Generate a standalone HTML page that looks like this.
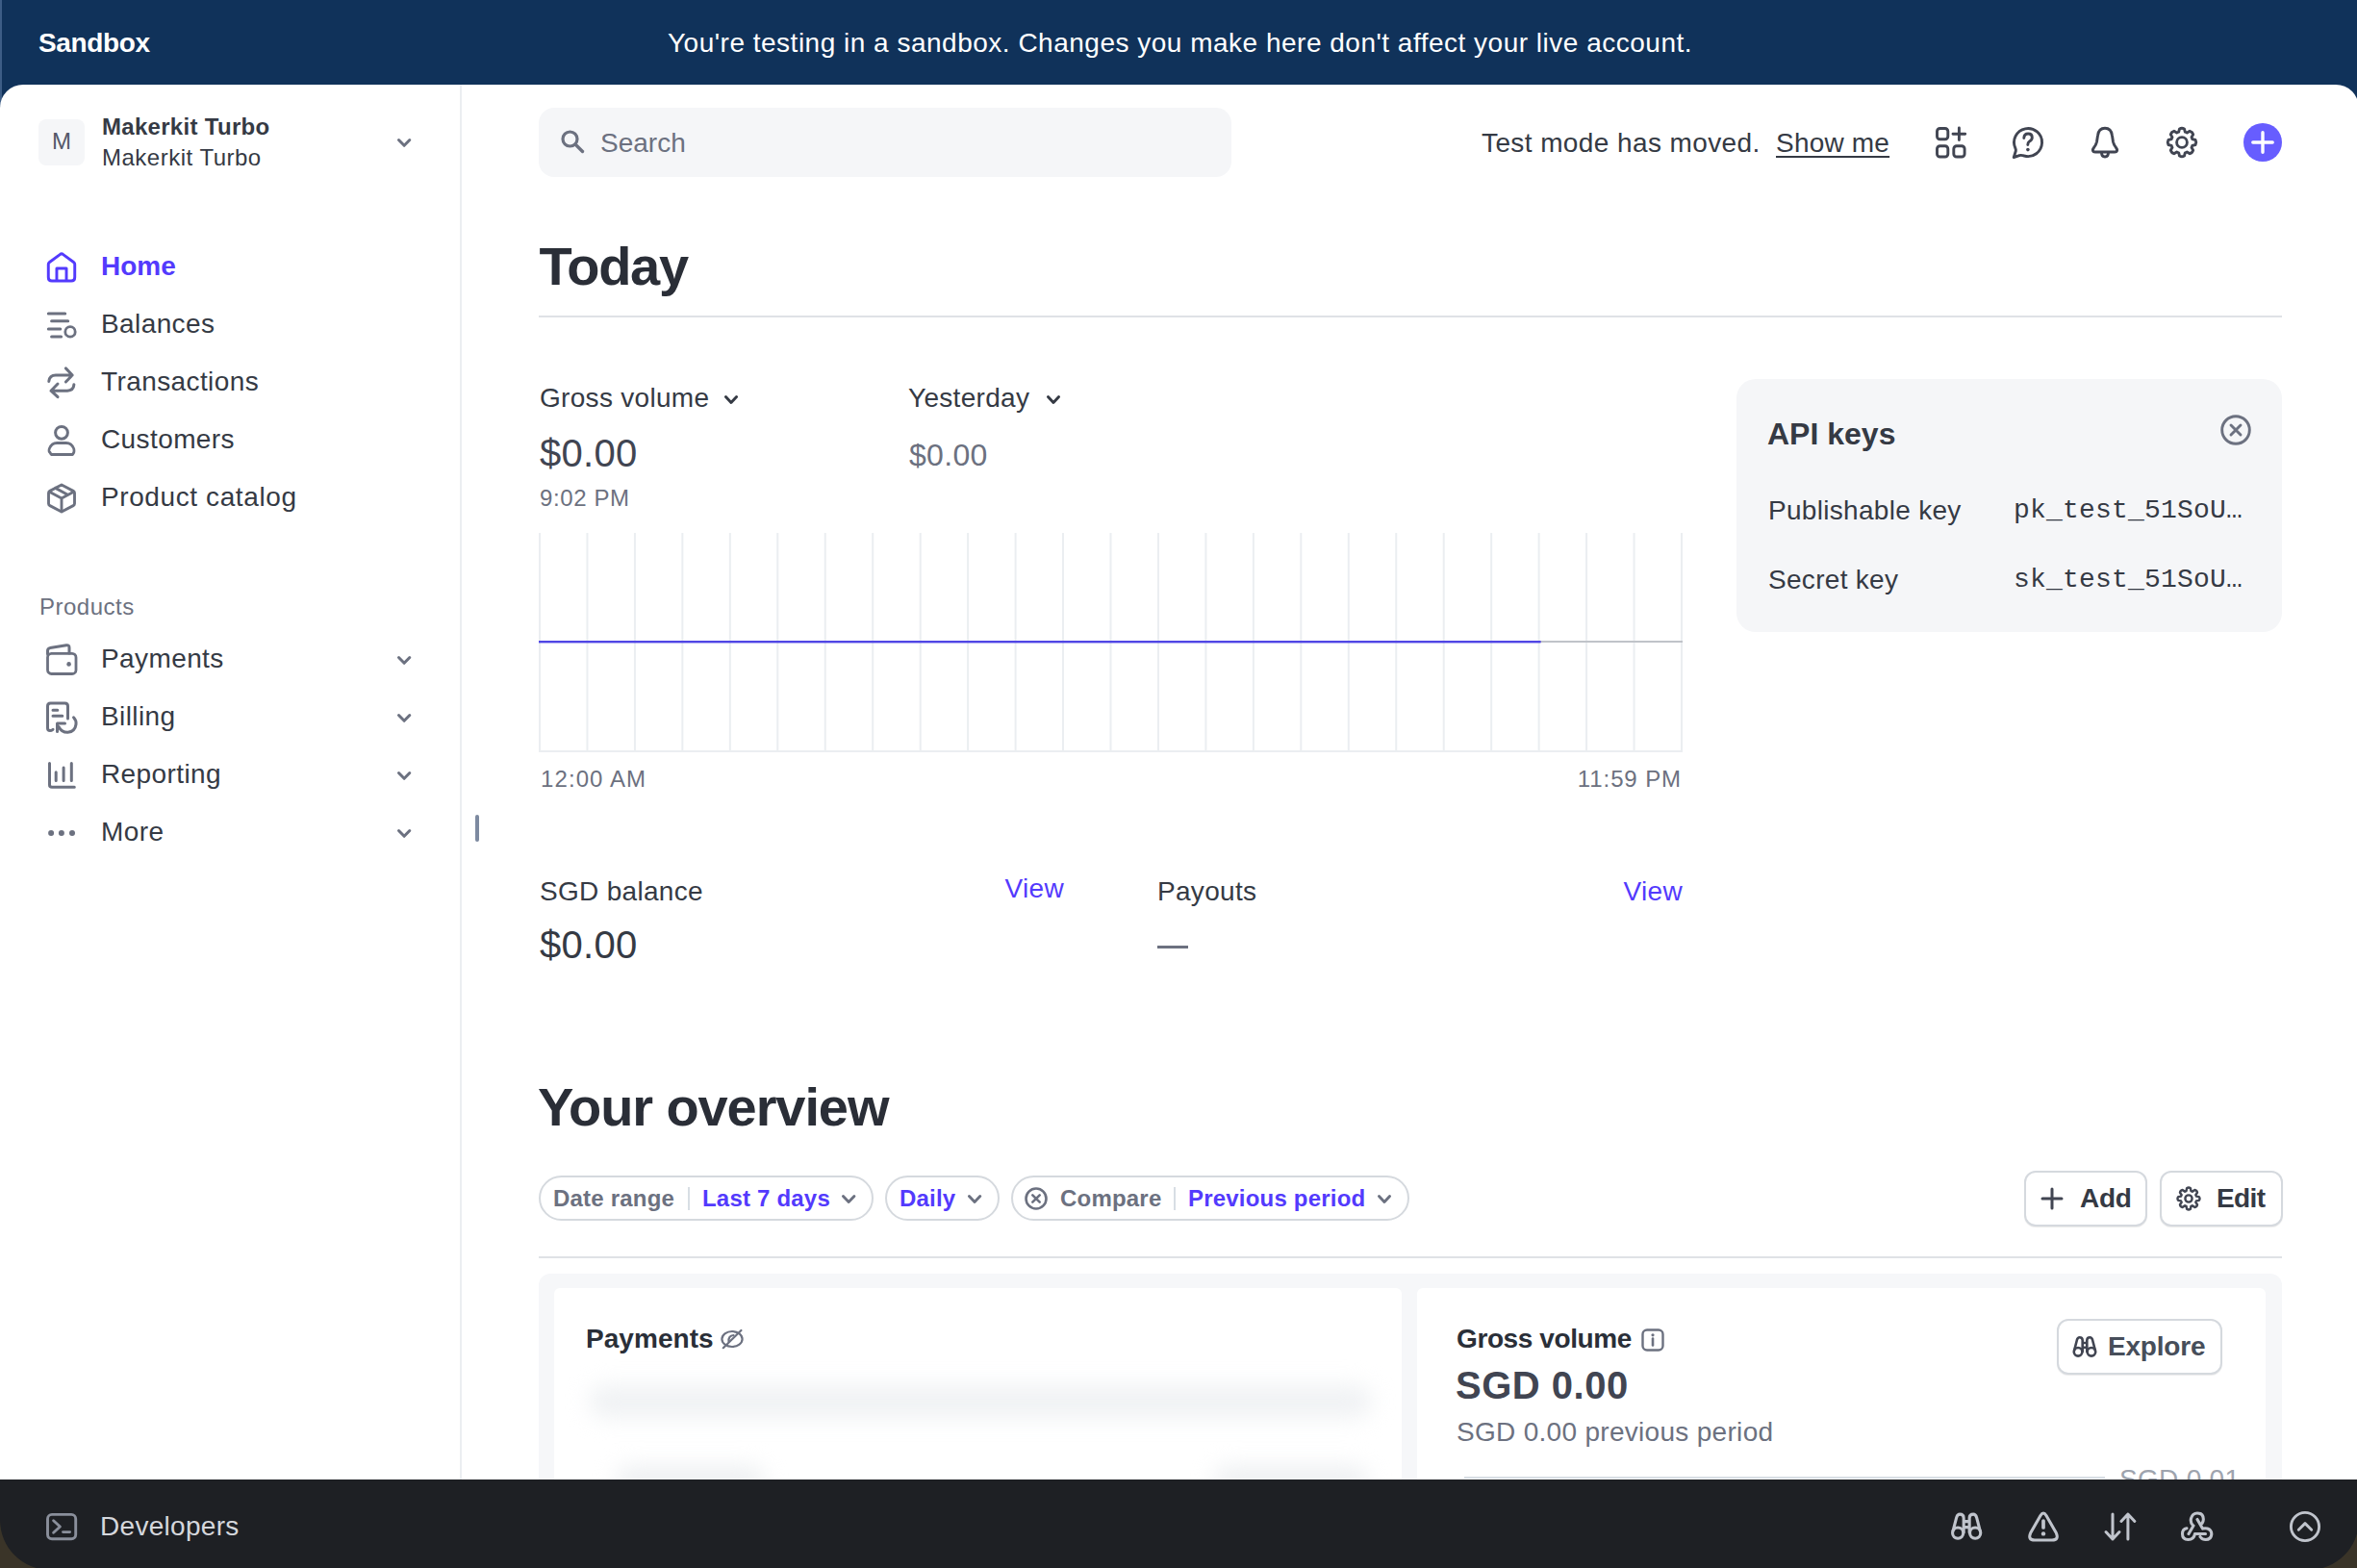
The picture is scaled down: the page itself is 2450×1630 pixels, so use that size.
<!DOCTYPE html>
<html><head><meta charset="utf-8"><title>Stripe Dashboard</title>
<style>
html,body{margin:0;padding:0;}
body{width:2450px;height:1630px;position:relative;overflow:hidden;background:#3a3428;font-family:"Liberation Sans",sans-serif;}
.t{position:absolute;white-space:nowrap;}
.ic{position:absolute;overflow:visible;}
</style></head><body>
<div style="position:absolute;left:0px;top:0px;width:2450px;height:120px;background:#10325a;"></div>
<div style="position:absolute;left:0px;top:0px;width:2px;height:110px;background:#3d5d86;"></div>
<div class="t" style="left:40px;top:30.6px;font-size:28px;line-height:28px;font-weight:700;color:#ffffff;letter-spacing:-0.35px;">Sandbox</div>
<div class="t" style="left:694px;top:30.5px;font-size:28px;line-height:28px;font-weight:400;color:#ffffff;letter-spacing:0.5px;">You're testing in a sandbox. Changes you make here don't affect your live account.</div>
<div style="position:absolute;left:0px;top:88px;width:2452px;height:1480px;background:#ffffff;border-radius:24px 24px 0 0;"></div>
<div style="position:absolute;left:478px;top:88px;width:2px;height:1450px;background:#ebeef1;"></div>
<div style="position:absolute;left:40px;top:124px;width:48px;height:48px;background:#f5f6f8;border-radius:8px;"></div>
<div class="t" style="left:54px;top:135.3px;font-size:24px;line-height:24px;font-weight:400;color:#545969;">M</div>
<div class="t" style="left:106px;top:119.7px;font-size:24px;line-height:24px;font-weight:700;color:#353a44;letter-spacing:0.3px;">Makerkit Turbo</div>
<div class="t" style="left:106px;top:151.5px;font-size:24px;line-height:24px;font-weight:400;color:#353a44;letter-spacing:0.5px;">Makerkit Turbo</div>
<svg class="ic" style="left:412.7px;top:143.9px;" width="14.3" height="8.8" viewBox="0 0 14.3 8.8" fill="none"><path d="M1.5 1.5 L7.15 7.300000000000001 L12.8 1.5" stroke="#6c7180" stroke-width="3.0" stroke-linecap="round" stroke-linejoin="round"/></svg>
<div class="t" style="left:105px;top:263.3px;font-size:28px;line-height:28px;font-weight:700;color:#533afd;">Home</div>
<div class="t" style="left:105px;top:323.3px;font-size:28px;line-height:28px;font-weight:400;color:#353a44;letter-spacing:0.4px;">Balances</div>
<div class="t" style="left:105px;top:383.3px;font-size:28px;line-height:28px;font-weight:400;color:#353a44;letter-spacing:0.4px;">Transactions</div>
<div class="t" style="left:105px;top:443.3px;font-size:28px;line-height:28px;font-weight:400;color:#353a44;letter-spacing:0.4px;">Customers</div>
<div class="t" style="left:105px;top:503.3px;font-size:28px;line-height:28px;font-weight:400;color:#353a44;letter-spacing:0.6px;">Product catalog</div>
<svg class="ic" style="left:44px;top:258px;" width="40" height="40" viewBox="0 0 40 40" fill="none"><g transform="translate(20 20) scale(0.915 0.94) translate(-20 -20)"><path d="M6 14.5 L18.5 5.5 Q20 4.5 21.5 5.5 L34 14.5 Q35 15.3 35 16.5 V31 Q35 35 31 35 H9 Q5 35 5 31 V16.5 Q5 15.3 6 14.5 Z" stroke="#533afd" stroke-width="3.2" stroke-linejoin="round"/><path d="M14.5 35 V21 H25.5 V35" stroke="#533afd" stroke-width="3.2" stroke-linejoin="round"/></g></svg>
<svg class="ic" style="left:44px;top:318px;" width="40" height="40" viewBox="0 0 40 40" fill="none"><path d="M6.3 8 H23.7 M9.6 15.7 H26.7 M6.3 24 H18.8 M9.6 32 H19.6" stroke="#6c7180" stroke-width="3" stroke-linecap="round" stroke-linejoin="round"/><circle cx="29" cy="26.9" r="5.2" stroke="#6c7180" stroke-width="2.8"/></svg>
<svg class="ic" style="left:44px;top:378px;" width="40" height="40" viewBox="0 0 40 40" fill="none"><path d="M6.8 18.4 Q7.5 12 14 12 H31 M24.4 4.9 L31.2 12 L24.4 19 M32.9 21.7 Q32.5 28 26 28.2 H9 M16 21 L9 28.2 L16 34.7" stroke="#6c7180" stroke-width="3" stroke-linecap="round" stroke-linejoin="round"/></svg>
<svg class="ic" style="left:44px;top:438px;" width="40" height="40" viewBox="0 0 40 40" fill="none"><circle cx="20" cy="11.8" r="6.4" stroke="#6c7180" stroke-width="3"/><g transform="translate(20 20) scale(0.88 1) translate(-20 -20)"><path d="M6.5 32.5 Q4.5 32 5.5 28.5 Q8 22.4 14.5 22.4 H25.5 Q32 22.4 34.5 28.5 Q35.5 32 33.5 34 Q32.8 34.6 31 34.6 H9 Q7.2 34.6 6.5 32.5 Z" stroke="#6c7180" stroke-width="3" stroke-linecap="round" stroke-linejoin="round"/></g></svg>
<svg class="ic" style="left:44px;top:498px;" width="40" height="40" viewBox="0 0 40 40" fill="none"><g transform="translate(20 20) scale(0.9) translate(-20 -20)"><path d="M20 4.5 L33.5 11.5 Q35 12.4 35 14 V26 Q35 27.6 33.5 28.5 L20 35.5 L6.5 28.5 Q5 27.6 5 26 V14 Q5 12.4 6.5 11.5 Z" stroke="#6c7180" stroke-width="3.2" stroke-linejoin="round"/><path d="M6 12.5 L20 20 L34 12.5 M20 20 V35 M13 8.2 L27 15.8" stroke="#6c7180" stroke-width="3.2" stroke-linejoin="round" stroke-linecap="round"/></g></svg>
<div class="t" style="left:41px;top:618.9px;font-size:24px;line-height:24px;font-weight:400;color:#6c7180;letter-spacing:0.5px;">Products</div>
<div class="t" style="left:105px;top:671.0px;font-size:28px;line-height:28px;font-weight:400;color:#353a44;letter-spacing:0.4px;">Payments</div>
<svg class="ic" style="left:412.6px;top:682.3000000000001px;" width="14.3" height="8.8" viewBox="0 0 14.3 8.8" fill="none"><path d="M1.5 1.5 L7.15 7.300000000000001 L12.8 1.5" stroke="#6c7180" stroke-width="3.0" stroke-linecap="round" stroke-linejoin="round"/></svg>
<div class="t" style="left:105px;top:730.9px;font-size:28px;line-height:28px;font-weight:400;color:#353a44;letter-spacing:0.4px;">Billing</div>
<svg class="ic" style="left:412.6px;top:742.2px;" width="14.3" height="8.8" viewBox="0 0 14.3 8.8" fill="none"><path d="M1.5 1.5 L7.15 7.300000000000001 L12.8 1.5" stroke="#6c7180" stroke-width="3.0" stroke-linecap="round" stroke-linejoin="round"/></svg>
<div class="t" style="left:105px;top:790.9px;font-size:28px;line-height:28px;font-weight:400;color:#353a44;letter-spacing:0.4px;">Reporting</div>
<svg class="ic" style="left:412.6px;top:802.2px;" width="14.3" height="8.8" viewBox="0 0 14.3 8.8" fill="none"><path d="M1.5 1.5 L7.15 7.300000000000001 L12.8 1.5" stroke="#6c7180" stroke-width="3.0" stroke-linecap="round" stroke-linejoin="round"/></svg>
<div class="t" style="left:105px;top:850.8px;font-size:28px;line-height:28px;font-weight:400;color:#353a44;letter-spacing:0.4px;">More</div>
<svg class="ic" style="left:412.6px;top:862.1px;" width="14.3" height="8.8" viewBox="0 0 14.3 8.8" fill="none"><path d="M1.5 1.5 L7.15 7.300000000000001 L12.8 1.5" stroke="#6c7180" stroke-width="3.0" stroke-linecap="round" stroke-linejoin="round"/></svg>
<svg class="ic" style="left:44px;top:666px;" width="40" height="40" viewBox="0 0 40 40" fill="none"><rect x="5.5" y="13.4" width="29.5" height="21.1" rx="4" stroke="#6c7180" stroke-width="2.8"/><path d="M5.5 14 V10.5 Q5.5 8.2 8 7.6 L25 4.8 Q28 4.3 28 7.2 V13" stroke="#6c7180" stroke-width="3" stroke-linecap="round" stroke-linejoin="round"/><circle cx="27.6" cy="24.4" r="2.3" fill="#6c7180"/></svg>
<svg class="ic" style="left:44px;top:726px;" width="40" height="40" viewBox="0 0 40 40" fill="none"><path d="M5.5 31 V8 Q5.5 5 8.5 5 H23.5 Q26.5 5 26.5 8 V21 M5.5 31 Q5.5 33.5 8 33.5 Q9.5 33.5 11 32.3" stroke="#6c7180" stroke-width="3" stroke-linecap="round" stroke-linejoin="round"/><path d="M11 12.3 H15.8 M11 18.2 H20.8" stroke="#6c7180" stroke-width="3" stroke-linecap="round" stroke-linejoin="round"/><path d="M32.5 19.8 Q35.5 23 35 27 Q34 34.5 26.5 35.3 Q20 35.5 17 29.5 M15.5 34.5 L15.5 26 L23.5 26" stroke="#6c7180" stroke-width="3" stroke-linecap="round" stroke-linejoin="round"/></svg>
<svg class="ic" style="left:44px;top:786px;" width="40" height="40" viewBox="0 0 40 40" fill="none"><path d="M7.5 7.4 V30 Q7.5 32.3 10 32.3 H33.3 M14.2 16.8 V25.5 M22.1 11.9 V25.5 M30.3 7.4 V25.5" stroke="#6c7180" stroke-width="3" stroke-linecap="round" stroke-linejoin="round"/></svg>
<svg class="ic" style="left:44px;top:846px;" width="40" height="40" viewBox="0 0 40 40" fill="none"><circle cx="9.1" cy="20" r="3" fill="#6c7180"/><circle cx="19.9" cy="20" r="3" fill="#6c7180"/><circle cx="31" cy="20" r="3" fill="#6c7180"/></svg>
<div style="position:absolute;left:494px;top:847px;width:4px;height:28px;background:#7d8aa0;border-radius:2px;"></div>
<div style="position:absolute;left:560px;top:112px;width:720px;height:72px;background:#f5f6f8;border-radius:16px;"></div>
<svg class="ic" style="left:580px;top:132px;" width="30" height="30" viewBox="0 0 30 30" fill="none"><circle cx="12.5" cy="12.5" r="7.5" stroke="#6c7180" stroke-width="3.2"/><path d="M18 18 L25.5 25.5" stroke="#6c7180" stroke-width="3.4" stroke-linecap="round"/></svg>
<div class="t" style="left:624px;top:135.3px;font-size:28px;line-height:28px;font-weight:400;color:#6c7180;">Search</div>
<div class="t" style="left:1540px;top:134.8px;font-size:28px;line-height:28px;font-weight:400;color:#353a44;letter-spacing:0.4px;">Test mode has moved.</div>
<div class="t" style="left:1846px;top:134.8px;font-size:28px;line-height:28px;font-weight:400;color:#353a44;letter-spacing:0.2px;text-decoration:underline;text-decoration-thickness:2px;text-underline-offset:4px;">Show me</div>
<svg class="ic" style="left:2008px;top:128px;" width="40" height="40" viewBox="0 0 40 40" fill="none"><rect x="5.5" y="5.5" width="11.3" height="11.3" rx="3" stroke="#414552" stroke-width="2.9"/><rect x="5.5" y="23.7" width="11.3" height="11.3" rx="3" stroke="#414552" stroke-width="2.9"/><rect x="22.8" y="23.7" width="11.3" height="11.3" rx="3" stroke="#414552" stroke-width="2.9"/><path d="M28.4 5 V17.5 M22 11.2 H34.7" stroke="#414552" stroke-width="2.9" stroke-linecap="round" stroke-linejoin="round"/></svg>
<svg class="ic" style="left:2080px;top:120px;" width="60" height="60" viewBox="2080 120 60 60" fill="none"><path d="M2094.9 154.1 A14.5 14.5 0 1 1 2104.2 162 Q2101 161 2099 161.6 L2093.2 163.6 L2095.3 157 Q2095.6 155.6 2094.9 154.1 Z" stroke="#414552" stroke-width="2.9" stroke-linecap="round" stroke-linejoin="round"/><path d="M2103.8 143.5 Q2104 139 2108.2 139 Q2112.3 139 2112.3 143 Q2112.3 145.5 2109.5 147 Q2107.8 148 2107.8 150.5" stroke="#414552" stroke-width="2.9" stroke-linecap="round" stroke-linejoin="round"/><circle cx="2107.9" cy="155.6" r="1.8" fill="#414552"/></svg>
<svg class="ic" style="left:2168px;top:128px;" width="40" height="40" viewBox="0 0 40 40" fill="none"><path d="M20 5.3 Q26.5 5.3 27.5 13 L28.5 19.5 Q29 22 31.5 25.5 Q33.5 28 32 29.5 Q31.3 30 30 30 H10 Q8.7 30 8 29.5 Q6.5 28 8.5 25.5 Q11 22 11.5 19.5 L12.5 13 Q13.5 5.3 20 5.3 Z" stroke="#414552" stroke-width="2.9" stroke-linecap="round" stroke-linejoin="round"/><path d="M16.5 30.5 Q16.5 35 20 35 Q23.5 35 23.5 30.5" stroke="#414552" stroke-width="2.9" stroke-linecap="round" stroke-linejoin="round"/></svg>
<svg class="ic" style="left:2248px;top:128px;" width="40" height="40" viewBox="0 0 40 40" fill="none"><path d="M16.70 9.19 L17.52 5.92 Q20.00 4.50 22.48 5.92 L23.30 9.19 A11.3 11.3 0 0 1 25.31 10.02 L28.20 8.29 Q30.96 9.04 31.71 11.80 L29.98 14.69 A11.3 11.3 0 0 1 30.81 16.70 L34.08 17.52 Q35.50 20.00 34.08 22.48 L30.81 23.30 A11.3 11.3 0 0 1 29.98 25.31 L31.71 28.20 Q30.96 30.96 28.20 31.71 L25.31 29.98 A11.3 11.3 0 0 1 23.30 30.81 L22.48 34.08 Q20.00 35.50 17.52 34.08 L16.70 30.81 A11.3 11.3 0 0 1 14.69 29.98 L11.80 31.71 Q9.04 30.96 8.29 28.20 L10.02 25.31 A11.3 11.3 0 0 1 9.19 23.30 L5.92 22.48 Q4.50 20.00 5.92 17.52 L9.19 16.70 A11.3 11.3 0 0 1 10.02 14.69 L8.29 11.80 Q9.04 9.04 11.80 8.29 L14.69 10.02 A11.3 11.3 0 0 1 16.70 9.19 Z" stroke="#414552" stroke-width="2.9" stroke-linejoin="round"/><circle cx="20" cy="20" r="5.4" stroke="#414552" stroke-width="2.9"/></svg>
<div style="position:absolute;left:2332px;top:128px;width:40px;height:40px;background:#675dff;border-radius:50%;"></div>
<svg class="ic" style="left:2332px;top:128px;" width="40" height="40" viewBox="0 0 40 40" fill="none"><path d="M20 9.8 V30.2 M9.8 20 H30.2" stroke="#ffffff" stroke-width="3.4" stroke-linecap="round"/></svg>
<div class="t" style="left:560.5px;top:248.8px;font-size:56px;line-height:56px;font-weight:700;color:#2a2e37;letter-spacing:-1.3px;">Today</div>
<div style="position:absolute;left:560px;top:328px;width:1812px;height:2px;background:#dfe2e6;"></div>
<div class="t" style="left:561px;top:400.3px;font-size:28px;line-height:28px;font-weight:400;color:#353a44;letter-spacing:0.3px;">Gross volume</div>
<svg class="ic" style="left:753px;top:410.5px;" width="14" height="9" viewBox="0 0 14 9" fill="none"><path d="M1.45 1.45 L7.0 7.55 L12.55 1.45" stroke="#353a44" stroke-width="2.9" stroke-linecap="round" stroke-linejoin="round"/></svg>
<div class="t" style="left:944px;top:400.3px;font-size:28px;line-height:28px;font-weight:400;color:#353a44;letter-spacing:0.3px;">Yesterday</div>
<svg class="ic" style="left:1087.7px;top:410.5px;" width="14" height="9" viewBox="0 0 14 9" fill="none"><path d="M1.45 1.45 L7.0 7.55 L12.55 1.45" stroke="#353a44" stroke-width="2.9" stroke-linecap="round" stroke-linejoin="round"/></svg>
<div class="t" style="left:561px;top:450.5px;font-size:40px;line-height:40px;font-weight:400;color:#414552;letter-spacing:0.3px;">$0.00</div>
<div class="t" style="left:945px;top:457.3px;font-size:32px;line-height:32px;font-weight:400;color:#6c7180;letter-spacing:0.3px;">$0.00</div>
<div class="t" style="left:561px;top:505.6px;font-size:24px;line-height:24px;font-weight:400;color:#6c7180;letter-spacing:0.6px;">9:02 PM</div>
<svg class="ic" style="left:560px;top:554px;" width="1190" height="230" viewBox="0 0 1190 230" fill="none"><rect x="0.00" y="0" width="2" height="228" fill="#ebeef1"/><rect x="49.46" y="0" width="2" height="228" fill="#ebeef1"/><rect x="98.92" y="0" width="2" height="228" fill="#ebeef1"/><rect x="148.38" y="0" width="2" height="228" fill="#ebeef1"/><rect x="197.83" y="0" width="2" height="228" fill="#ebeef1"/><rect x="247.29" y="0" width="2" height="228" fill="#ebeef1"/><rect x="296.75" y="0" width="2" height="228" fill="#ebeef1"/><rect x="346.21" y="0" width="2" height="228" fill="#ebeef1"/><rect x="395.67" y="0" width="2" height="228" fill="#ebeef1"/><rect x="445.12" y="0" width="2" height="228" fill="#ebeef1"/><rect x="494.58" y="0" width="2" height="228" fill="#ebeef1"/><rect x="544.04" y="0" width="2" height="228" fill="#ebeef1"/><rect x="593.50" y="0" width="2" height="228" fill="#ebeef1"/><rect x="642.96" y="0" width="2" height="228" fill="#ebeef1"/><rect x="692.42" y="0" width="2" height="228" fill="#ebeef1"/><rect x="741.88" y="0" width="2" height="228" fill="#ebeef1"/><rect x="791.33" y="0" width="2" height="228" fill="#ebeef1"/><rect x="840.79" y="0" width="2" height="228" fill="#ebeef1"/><rect x="890.25" y="0" width="2" height="228" fill="#ebeef1"/><rect x="939.71" y="0" width="2" height="228" fill="#ebeef1"/><rect x="989.17" y="0" width="2" height="228" fill="#ebeef1"/><rect x="1038.62" y="0" width="2" height="228" fill="#ebeef1"/><rect x="1088.08" y="0" width="2" height="228" fill="#ebeef1"/><rect x="1137.54" y="0" width="2" height="228" fill="#ebeef1"/><rect x="1187.00" y="0" width="2" height="228" fill="#ebeef1"/><rect x="0" y="226" width="1189" height="2" fill="#ebeef1"/><rect x="1038.62" y="112" width="150.38" height="2" fill="#c0c3c9"/><rect x="0" y="112" width="1041.62" height="2.4" fill="#5046e5"/></svg>
<div class="t" style="left:562px;top:798.1px;font-size:24px;line-height:24px;font-weight:400;color:#6c7180;letter-spacing:1.1px;">12:00 AM</div>
<div class="t" style="right:702px;top:798.1px;font-size:24px;line-height:24px;font-weight:400;color:#6c7180;letter-spacing:0.9px;">11:59 PM</div>
<div style="position:absolute;left:1805px;top:394px;width:567px;height:263px;background:#f5f6f8;border-radius:20px;"></div>
<div class="t" style="left:1837px;top:434.9px;font-size:32px;line-height:32px;font-weight:700;color:#353a44;">API keys</div>
<svg class="ic" style="left:2304px;top:427px;" width="40" height="40" viewBox="0 0 40 40" fill="none"><circle cx="20" cy="20" r="14.3" stroke="#6c7180" stroke-width="2.9"/><path d="M15 15 L25 25 M25 15 L15 25" stroke="#6c7180" stroke-width="2.9" stroke-linecap="round"/></svg>
<div class="t" style="left:1838px;top:516.7px;font-size:28px;line-height:28px;font-weight:400;color:#353a44;letter-spacing:0.3px;">Publishable key</div>
<div class="t" style="left:1838px;top:588.5px;font-size:28px;line-height:28px;font-weight:400;color:#353a44;letter-spacing:0.3px;">Secret key</div>
<div class="t" style="left:2093px;top:516.7px;font-size:28px;line-height:28px;font-weight:400;color:#353a44;letter-spacing:0.2px;font-family:'Liberation Mono',monospace;">pk_test_51SoU…</div>
<div class="t" style="left:2093px;top:588.5px;font-size:28px;line-height:28px;font-weight:400;color:#353a44;letter-spacing:0.2px;font-family:'Liberation Mono',monospace;">sk_test_51SoU…</div>
<div class="t" style="left:561px;top:912.6px;font-size:28px;line-height:28px;font-weight:400;color:#353a44;letter-spacing:0.3px;">SGD balance</div>
<div class="t" style="right:1344px;top:910.1px;font-size:28px;line-height:28px;font-weight:400;color:#533afd;letter-spacing:0.3px;">View</div>
<div class="t" style="left:561px;top:961.7px;font-size:40px;line-height:40px;font-weight:400;color:#353a44;letter-spacing:0.3px;">$0.00</div>
<div class="t" style="left:1203px;top:912.6px;font-size:28px;line-height:28px;font-weight:400;color:#353a44;letter-spacing:0.3px;">Payouts</div>
<div class="t" style="right:701px;top:912.6px;font-size:28px;line-height:28px;font-weight:400;color:#533afd;letter-spacing:0.3px;">View</div>
<div style="position:absolute;left:1203px;top:982.5px;width:31.5px;height:3px;background:#6c7180;"></div>
<div class="t" style="left:559px;top:1122.6px;font-size:56px;line-height:56px;font-weight:700;color:#2a2e37;letter-spacing:-1.1px;">Your overview</div>
<div style="position:absolute;left:560px;top:1222px;width:348px;height:47px;box-sizing:border-box;border:2px solid #d5d9de;border-radius:24px;background:#fff;"></div>
<div class="t" style="left:575px;top:1233.8px;font-size:24px;line-height:24px;font-weight:700;color:#6c7180;letter-spacing:0.2px;">Date range</div>
<div style="position:absolute;left:715px;top:1234px;width:2px;height:24px;background:#d8dee4;"></div>
<div class="t" style="left:730px;top:1233.8px;font-size:24px;line-height:24px;font-weight:700;color:#533afd;letter-spacing:0.2px;">Last 7 days</div>
<svg class="ic" style="left:874.6px;top:1241.8px;" width="14.4" height="8.9" viewBox="0 0 14.4 8.9" fill="none"><path d="M1.45 1.45 L7.2 7.45 L12.950000000000001 1.45" stroke="#6c7180" stroke-width="2.9" stroke-linecap="round" stroke-linejoin="round"/></svg>
<div style="position:absolute;left:920px;top:1222px;width:119px;height:47px;box-sizing:border-box;border:2px solid #d5d9de;border-radius:24px;background:#fff;"></div>
<div class="t" style="left:935px;top:1233.8px;font-size:24px;line-height:24px;font-weight:700;color:#533afd;letter-spacing:0.2px;">Daily</div>
<svg class="ic" style="left:1005.7px;top:1241.8px;" width="14.2" height="8.9" viewBox="0 0 14.2 8.9" fill="none"><path d="M1.45 1.45 L7.1 7.45 L12.75 1.45" stroke="#6c7180" stroke-width="2.9" stroke-linecap="round" stroke-linejoin="round"/></svg>
<div style="position:absolute;left:1051px;top:1222px;width:414px;height:47px;box-sizing:border-box;border:2px solid #d5d9de;border-radius:24px;background:#fff;"></div>
<svg class="ic" style="left:1061px;top:1230px;" width="32" height="32" viewBox="0 0 32 32" fill="none"><circle cx="16" cy="16" r="10.5" stroke="#6c7180" stroke-width="2.6"/><path d="M12.3 12.3 L19.7 19.7 M19.7 12.3 L12.3 19.7" stroke="#6c7180" stroke-width="2.6" stroke-linecap="round"/></svg>
<div class="t" style="left:1102px;top:1233.8px;font-size:24px;line-height:24px;font-weight:700;color:#6c7180;letter-spacing:0.2px;">Compare</div>
<div style="position:absolute;left:1220px;top:1234px;width:2px;height:24px;background:#d8dee4;"></div>
<div class="t" style="left:1235px;top:1233.8px;font-size:24px;line-height:24px;font-weight:700;color:#533afd;letter-spacing:0.2px;">Previous period</div>
<svg class="ic" style="left:1432px;top:1241.8px;" width="14" height="8.9" viewBox="0 0 14 8.9" fill="none"><path d="M1.45 1.45 L7.0 7.45 L12.55 1.45" stroke="#6c7180" stroke-width="2.9" stroke-linecap="round" stroke-linejoin="round"/></svg>
<div style="position:absolute;left:2104px;top:1217px;width:128px;height:58px;box-sizing:border-box;border:2px solid #d5d9de;border-radius:12px;background:#fff;box-shadow:0 1px 1px rgba(0,0,0,0.08);"></div>
<svg class="ic" style="left:2115px;top:1228px;" width="35" height="36" viewBox="2115 1228 35 36" fill="none"><path d="M2133 1236 V1256 M2123 1246 H2143" stroke="#414552" stroke-width="3" stroke-linecap="round"/></svg>
<div class="t" style="left:2162px;top:1232.3px;font-size:28px;line-height:28px;font-weight:700;color:#353a44;letter-spacing:-0.3px;">Add</div>
<div style="position:absolute;left:2245px;top:1217px;width:128px;height:58px;box-sizing:border-box;border:2px solid #d5d9de;border-radius:12px;background:#fff;box-shadow:0 1px 1px rgba(0,0,0,0.08);"></div>
<svg class="ic" style="left:2259px;top:1230px;" width="32" height="32" viewBox="0 0 32 32" fill="none"><path d="M13.57 8.06 L14.09 5.17 Q16.00 3.80 17.91 5.17 L18.43 8.06 A8.3 8.3 0 0 1 19.90 8.67 L22.31 6.99 Q24.63 7.37 25.01 9.69 L23.33 12.10 A8.3 8.3 0 0 1 23.94 13.57 L26.83 14.09 Q28.20 16.00 26.83 17.91 L23.94 18.43 A8.3 8.3 0 0 1 23.33 19.90 L25.01 22.31 Q24.63 24.63 22.31 25.01 L19.90 23.33 A8.3 8.3 0 0 1 18.43 23.94 L17.91 26.83 Q16.00 28.20 14.09 26.83 L13.57 23.94 A8.3 8.3 0 0 1 12.10 23.33 L9.69 25.01 Q7.37 24.63 6.99 22.31 L8.67 19.90 A8.3 8.3 0 0 1 8.06 18.43 L5.17 17.91 Q3.80 16.00 5.17 14.09 L8.06 13.57 A8.3 8.3 0 0 1 8.67 12.10 L6.99 9.69 Q7.37 7.37 9.69 6.99 L12.10 8.67 A8.3 8.3 0 0 1 13.57 8.06 Z" stroke="#414552" stroke-width="2.4" stroke-linejoin="round"/><circle cx="16" cy="16" r="3.6" stroke="#414552" stroke-width="2.4"/></svg>
<div class="t" style="left:2304px;top:1232.3px;font-size:28px;line-height:28px;font-weight:700;color:#353a44;letter-spacing:-0.6px;">Edit</div>
<div style="position:absolute;left:560px;top:1306px;width:1812px;height:2px;background:#dfe2e6;"></div>
<div style="position:absolute;left:560px;top:1324px;width:1812px;height:260px;background:#f6f7f9;border-radius:12px;"></div>
<div style="position:absolute;left:576px;top:1339px;width:881px;height:260px;background:#ffffff;border-radius:6px;"></div>
<div style="position:absolute;left:1473px;top:1339px;width:882px;height:260px;background:#ffffff;border-radius:6px;"></div>
<div class="t" style="left:609px;top:1378.1px;font-size:28px;line-height:28px;font-weight:700;color:#2a2f38;letter-spacing:0.05px;">Payments</div>
<svg class="ic" style="left:740px;top:1375px;" width="45" height="35" viewBox="740 1375 45 35" fill="none"><ellipse cx="761" cy="1392" rx="10.6" ry="8" stroke="#6c7180" stroke-width="2.2"/><path d="M757.5 1394.5 Q757 1388.5 762.5 1388" stroke="#6c7180" stroke-width="2.2" stroke-linecap="round"/><path d="M751.8 1401.2 L770.4 1383" stroke="#6c7180" stroke-width="2.2" stroke-linecap="round"/></svg>
<div style="position:absolute;left:612px;top:1440px;width:814px;height:34px;background:#f0f2f4;border-radius:17px;filter:blur(11px);"></div>
<div style="position:absolute;left:640px;top:1524px;width:155px;height:30px;background:#eef0f2;border-radius:15px;filter:blur(11px);"></div>
<div style="position:absolute;left:1262px;top:1524px;width:160px;height:30px;background:#eef0f2;border-radius:15px;filter:blur(11px);"></div>
<div class="t" style="left:1514px;top:1378.2px;font-size:28px;line-height:28px;font-weight:700;color:#2a2f38;letter-spacing:-0.4px;">Gross volume</div>
<svg class="ic" style="left:1704px;top:1379px;" width="28" height="28" viewBox="0 0 28 28" fill="none"><rect x="3.5" y="3.5" width="21" height="21" rx="4.5" stroke="#6c7180" stroke-width="2.4"/><path d="M14 12.5 V19.5" stroke="#6c7180" stroke-width="2.6" stroke-linecap="round"/><circle cx="14" cy="8.8" r="1.6" fill="#6c7180"/></svg>
<div class="t" style="left:1513px;top:1420.0px;font-size:40px;line-height:40px;font-weight:700;color:#414552;letter-spacing:0.5px;">SGD 0.00</div>
<div class="t" style="left:1514px;top:1474.5px;font-size:28px;line-height:28px;font-weight:400;color:#6c7180;letter-spacing:0.3px;">SGD 0.00 previous period</div>
<div style="position:absolute;left:2138px;top:1371px;width:172px;height:58px;box-sizing:border-box;border:2px solid #d5d9de;border-radius:12px;background:#fff;box-shadow:0 1px 1px rgba(0,0,0,0.08);"></div>
<svg class="ic" style="left:2140px;top:1375px;" width="55" height="50" viewBox="2140 1375 55 50" fill="none"><path d="M2156.22 1403.38 L2158.91 1392.98 Q2159.68 1390.29 2161.61 1390.29 Q2164.69 1390.29 2164.69 1393.37 V1404.92 M2177.78 1403.38 L2175.09 1392.98 Q2174.32 1390.29 2172.39 1390.29 Q2169.31 1390.29 2169.31 1393.37 V1404.92 M2164.69 1396.07 H2169.31 M2164.69 1400.68 H2169.31" stroke="#414552" stroke-width="2.6" stroke-linecap="round" stroke-linejoin="round"/><circle cx="2160.07" cy="1405.31" r="4.31" stroke="#414552" stroke-width="2.6"/><circle cx="2173.93" cy="1405.31" r="4.31" stroke="#414552" stroke-width="2.6"/></svg>
<div class="t" style="left:2191px;top:1386.3px;font-size:28px;line-height:28px;font-weight:700;color:#474e5a;letter-spacing:-0.2px;">Explore</div>
<div style="position:absolute;left:1522px;top:1535px;width:666px;height:2px;background:#d8dee4;"></div>
<div class="t" style="left:2203px;top:1524.3px;font-size:28px;line-height:28px;font-weight:400;color:#9ea4ae;letter-spacing:0.3px;">SGD 0.01</div>
<div style="position:absolute;left:0px;top:1538px;width:2452px;height:94px;background:#1e2024;border-radius:0 0 52px 52px;"></div>
<svg class="ic" style="left:40px;top:1560px;" width="50" height="52" viewBox="40 1560 50 52" fill="none"><rect x="49.5" y="1574.4" width="29.2" height="25.4" rx="4.5" stroke="#8a8f9b" stroke-width="2.9"/><path d="M55.6 1580.8 L62.4 1587 L55.6 1593.2 M65.5 1592.6 H72.6" stroke="#8a8f9b" stroke-width="2.9" stroke-linecap="round" stroke-linejoin="round"/></svg>
<div class="t" style="left:104px;top:1573.0px;font-size:28px;line-height:28px;font-weight:400;color:#d5d7dc;letter-spacing:0.3px;">Developers</div>
<svg class="ic" style="left:2010px;top:1550px;" width="70" height="70" viewBox="2010 1550 70 70" fill="none"><path d="M2030.15 1591.10 L2033.65 1577.60 Q2034.65 1574.10 2037.15 1574.10 Q2041.15 1574.10 2041.15 1578.10 V1593.10 M2058.15 1591.10 L2054.65 1577.60 Q2053.65 1574.10 2051.15 1574.10 Q2047.15 1574.10 2047.15 1578.10 V1593.10 M2041.15 1581.60 H2047.15 M2041.15 1587.60 H2047.15" stroke="#c0c4cc" stroke-width="3.1" stroke-linecap="round" stroke-linejoin="round"/><circle cx="2035.15" cy="1593.60" r="5.60" stroke="#c0c4cc" stroke-width="3.1"/><circle cx="2053.15" cy="1593.60" r="5.60" stroke="#c0c4cc" stroke-width="3.1"/></svg>
<svg class="ic" style="left:2100px;top:1560px;" width="50" height="50" viewBox="2100 1560 50 50" fill="none"><path d="M2121 1575.5 Q2124 1570.5 2127 1575.5 L2137.3 1593.5 Q2140.5 1601 2133 1601 H2115 Q2107.5 1601 2110.7 1593.5 Z" stroke="#c0c4cc" stroke-width="3.1" stroke-linecap="round" stroke-linejoin="round"/><path d="M2124 1581 V1588" stroke="#c0c4cc" stroke-width="3.7" stroke-linecap="round" stroke-linejoin="round"/><circle cx="2124" cy="1594.4" r="2.2" fill="#c0c4cc"/></svg>
<svg class="ic" style="left:2180px;top:1560px;" width="50" height="50" viewBox="2180 1560 50 50" fill="none"><path d="M2196 1574 V1600 M2189 1592.5 L2196 1600 L2203 1592.5 M2211.9 1600 V1574 M2204.9 1581.5 L2211.9 1574 L2218.9 1581.5" stroke="#c0c4cc" stroke-width="3.0" stroke-linecap="round" stroke-linejoin="round"/></svg>
<svg class="ic" style="left:2260px;top:1560px;" width="50" height="50" viewBox="2260 1560 50 50" fill="none"><path d="M2279.3 1585.5 Q2276.5 1582.5 2277.5 1578.5 Q2279 1573 2284 1573 Q2290 1573 2290.3 1579 Q2290.5 1581.5 2289 1583.5 M2284 1579.5 L2289.5 1589 M2289.5 1589 Q2292.5 1588.5 2294.5 1589 Q2299 1590.5 2298.8 1595 Q2298.3 1600.5 2292.8 1600.5 Q2289 1600.5 2287 1597.5 M2292.5 1594.5 H2281.5 M2281.5 1594.5 Q2280.5 1600.5 2274.5 1600.5 Q2268.5 1600.5 2268.5 1594.5 Q2268.5 1589.5 2273 1588.7 M2275 1594.5 L2280 1586" stroke="#c0c4cc" stroke-width="3.1" stroke-linecap="round" stroke-linejoin="round"/></svg>
<svg class="ic" style="left:2370px;top:1560px;" width="50" height="50" viewBox="2370 1560 50 50" fill="none"><circle cx="2396" cy="1587" r="14.6" stroke="#c0c4cc" stroke-width="2.9" stroke-linecap="round" stroke-linejoin="round"/><path d="M2389.3 1590.3 L2396 1583.6 L2402.7 1590.3" stroke="#c0c4cc" stroke-width="2.9" stroke-linecap="round" stroke-linejoin="round"/></svg>

</body></html>
